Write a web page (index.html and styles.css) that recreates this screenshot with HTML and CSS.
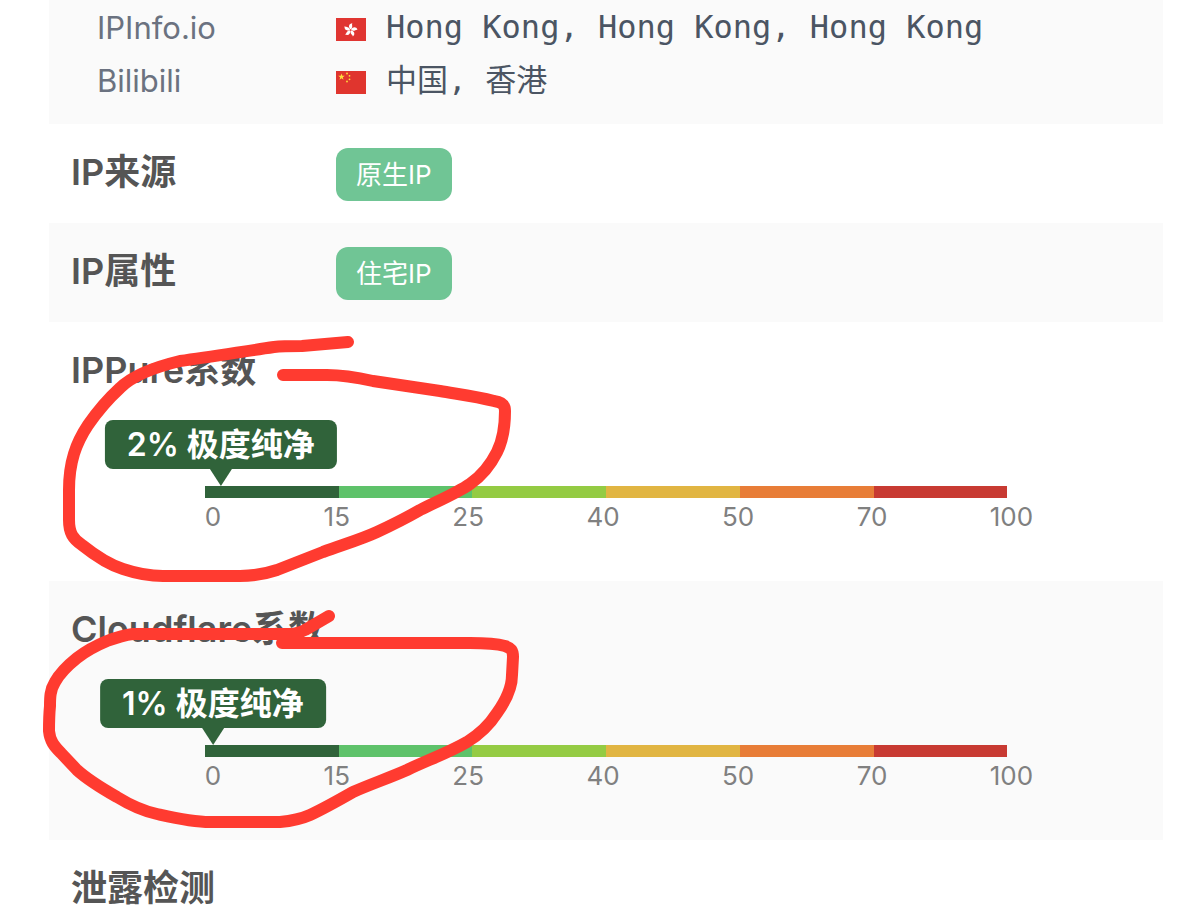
FILE: index.html
```html
<!DOCTYPE html>
<html lang="zh-CN">
<head>
    <meta charset="UTF-8">
    <meta name="viewport" content="width=device-width, initial-scale=1.0">
    <title>IP 检测</title>
    <link rel="stylesheet" href="styles.css">
</head>
<body>
    <main class="report">
        <section class="row row-locations">
            <div class="location">
                <div class="location-name">IPInfo.io</div>
                <svg class="flag" viewBox="0 0 30 23">
                    <rect width="30" height="23" fill="#e03531"/>
                    <g fill="#fff" transform="translate(14.500 12) rotate(8)">
                        <path id="petal" d="M-.3-.8C-2.800-2.500-2.600-6.300 1-6.900C0-5.500 2.400-4 .5-.8Z"/>
                        <use href="#petal" transform="rotate(72)"/>
                        <use href="#petal" transform="rotate(144)"/>
                        <use href="#petal" transform="rotate(216)"/>
                        <use href="#petal" transform="rotate(288)"/>
                    </g>
                </svg>
                <div class="location-value">Hong Kong, Hong Kong, Hong Kong</div>
            </div>
            <div class="location">
                <div class="location-name">Bilibili</div>
                <svg class="flag" viewBox="0 0 30 23">
                    <rect width="30" height="23" fill="#e0352e"/>
                    <g fill="#ffde3b">
                        <path d="M5.500 2.500l.8 2.300h2.500l-2 1.500.7 2.400-2-1.400-2 1.400.7-2.400-2-1.500h2.500z"/>
                        <circle cx="11" cy="2.500" r=".9"/>
                        <circle cx="13.500" cy="4.800" r=".9"/>
                        <circle cx="13.500" cy="8.300" r=".9"/>
                        <circle cx="11" cy="10.500" r=".9"/>
                    </g>
                </svg>
                <div class="location-value location-value-cn">中国, 香港</div>
            </div>
        </section>

        <section class="row row-tag">
            <h2 class="row-title">IP来源</h2>
            <span class="tag">原生IP</span>
        </section>

        <section class="row row-tag">
            <h2 class="row-title">IP属性</h2>
            <span class="tag">住宅IP</span>
        </section>

        <section class="row row-score">
            <h2 class="row-title">IPPure系数</h2>
            <div class="gauge">
                <div class="gauge-pointer" style="left: 2%">2% 极度纯净</div>
                <div class="gauge-bar">
                    <i class="level-1"></i>
                    <i class="level-2"></i>
                    <i class="level-3"></i>
                    <i class="level-4"></i>
                    <i class="level-5"></i>
                    <i class="level-6"></i>
                </div>
                <div class="gauge-scale">
                    <span>0</span>
                    <span>15</span>
                    <span>25</span>
                    <span>40</span>
                    <span>50</span>
                    <span>70</span>
                    <span>100</span>
                </div>
            </div>
        </section>

        <section class="row row-score">
            <h2 class="row-title">Cloudflare系数</h2>
            <div class="gauge">
                <div class="gauge-pointer" style="left: 1%">1% 极度纯净</div>
                <div class="gauge-bar">
                    <i class="level-1"></i>
                    <i class="level-2"></i>
                    <i class="level-3"></i>
                    <i class="level-4"></i>
                    <i class="level-5"></i>
                    <i class="level-6"></i>
                </div>
                <div class="gauge-scale">
                    <span>0</span>
                    <span>15</span>
                    <span>25</span>
                    <span>40</span>
                    <span>50</span>
                    <span>70</span>
                    <span>100</span>
                </div>
            </div>
        </section>

        <section class="row row-leak">
            <h2 class="row-title">泄露检测</h2>
        </section>
    </main>

    <!-- 红色手绘标注 -->
    <svg class="marks" width="540" height="840" viewBox="0 0 540 840">
        <path d="M348 342L302 346C290 346 282 346 274 347C240 352 210 357 180 361C155 367 133 375 120 388C108 399 97 412 88 425C76 443 69 462 69 490L69 520C69 533 73 539 82 545C92 553 107 564 123 569C138 574 150 576 163 576L240 576C255 576 265 574 277 570L323 552C345 544 362 539 377 532C392 525 406 518 420 510C440 500 457 493 470 484C483 475 491 464 497 452C503 440 505 425 505 411C505 405 502 402 494 401C475 396 457 394 440 391L373 381C355 377 342 375 327 375L283 375"/>
        <path d="M329 616L305 630C299 633 294 634 288 634L133 634C124 635 115 638 107 641C95 646 86 651 77 658C67 666 60 673 55 682C50 690 50 698 50 706C49 716 49 724 49 731C50 741 54 746 61 753L77 770C88 780 103 789 117 797C130 805 143 811 157 814C175 818 192 822 210 822L280 822C291 821 301 819 310 815C325 808 339 800 353 792C371 784 389 778 407 770C428 760 448 753 467 742C480 734 490 724 497 713C507 699 512 686 512 675L513 657C513 650 511 648 505 646C494 643 482 643 470 643L282 643"/>
    </svg>
</body>
</html>
```

FILE: styles.css
```css
* {
    margin: 0;
    padding: 0;
    box-sizing: border-box;
}

body {
    position: relative;
    font-family: Inter, 'Noto Sans CJK SC', sans-serif;
    background: #fff;
    color: #555;
}

.report {
    margin: 0 16px 0 49px;
}

.row {
    padding: 24px 22px;
}

.row:nth-child(odd) {
    background: #fafafa;
}

.row-title {
    flex: 0 0 265px;
    font-size: 36px;
    font-weight: 600;
    line-height: 48px;
}

/* 归属地 */
.row-locations {
    padding: 1px 22px 17px 48px;
}

.location {
    display: flex;
    align-items: center;
    line-height: 53px;
}

.location-name {
    flex: 0 0 239px;
    font-size: 31px;
    color: #6b7280;
}

.flag {
    width: 30px;
    height: 23px;
    margin-top: 4px;
    margin-right: 20px;
}

.location-value {
    font-family: 'DejaVu Sans Mono', 'Noto Sans CJK SC', monospace;
    font-size: 32px;
    color: #4b5563;
}

.location-value-cn {
    font-size: 31px;
}

/* 标签 */
.row-tag {
    display: flex;
    align-items: flex-start;
    padding-bottom: 22px;
}

.tag {
    padding: 0 20px;
    border-radius: 12px;
    background: #70c595;
    color: #fff;
    font-size: 26px;
    line-height: 53px;
}

/* 评分条 */
.row-score {
    padding-bottom: 45px;
}

.row-score:nth-child(even),
.row-leak {
    background: #fff;
}

.gauge {
    position: relative;
    width: 75%;
    margin: 0 auto;
    padding-top: 92px;
}

.gauge-pointer {
    position: absolute;
    top: 26px;
    transform: translateX(-50%);
    padding: 0 22px;
    border-radius: 8px;
    background: #30633a;
    color: #fff;
    font-size: 32px;
    font-weight: 600;
    line-height: 49px;
    white-space: nowrap;
}

.gauge-pointer::after {
    content: '';
    position: absolute;
    top: 100%;
    left: 50%;
    transform: translateX(-50%);
    border: 11px solid transparent;
    border-top: 17px solid #30633a;
    border-bottom: 0;
}

.gauge-bar {
    display: flex;
    height: 12px;
}

.gauge-bar i {
    flex: 1;
}

.level-1 {
    background: #30633a;
}

.level-2 {
    background: #5ec26a;
}

.level-3 {
    background: #94cb43;
}

.level-4 {
    background: #e1b542;
}

.level-5 {
    background: #e87d37;
}

.level-6 {
    background: #c83a32;
}

.gauge-scale {
    display: flex;
    justify-content: space-between;
    margin-right: -26px;
    color: #808080;
    font-size: 26px;
    line-height: 38px;
}

.row-leak {
    padding-bottom: 4px;
}

.marks {
    position: absolute;
    top: 0;
    left: 0;
    fill: none;
    stroke: #ff3b30;
    stroke-width: 12;
    stroke-linecap: round;
    stroke-linejoin: round;
    pointer-events: none;
}
```
